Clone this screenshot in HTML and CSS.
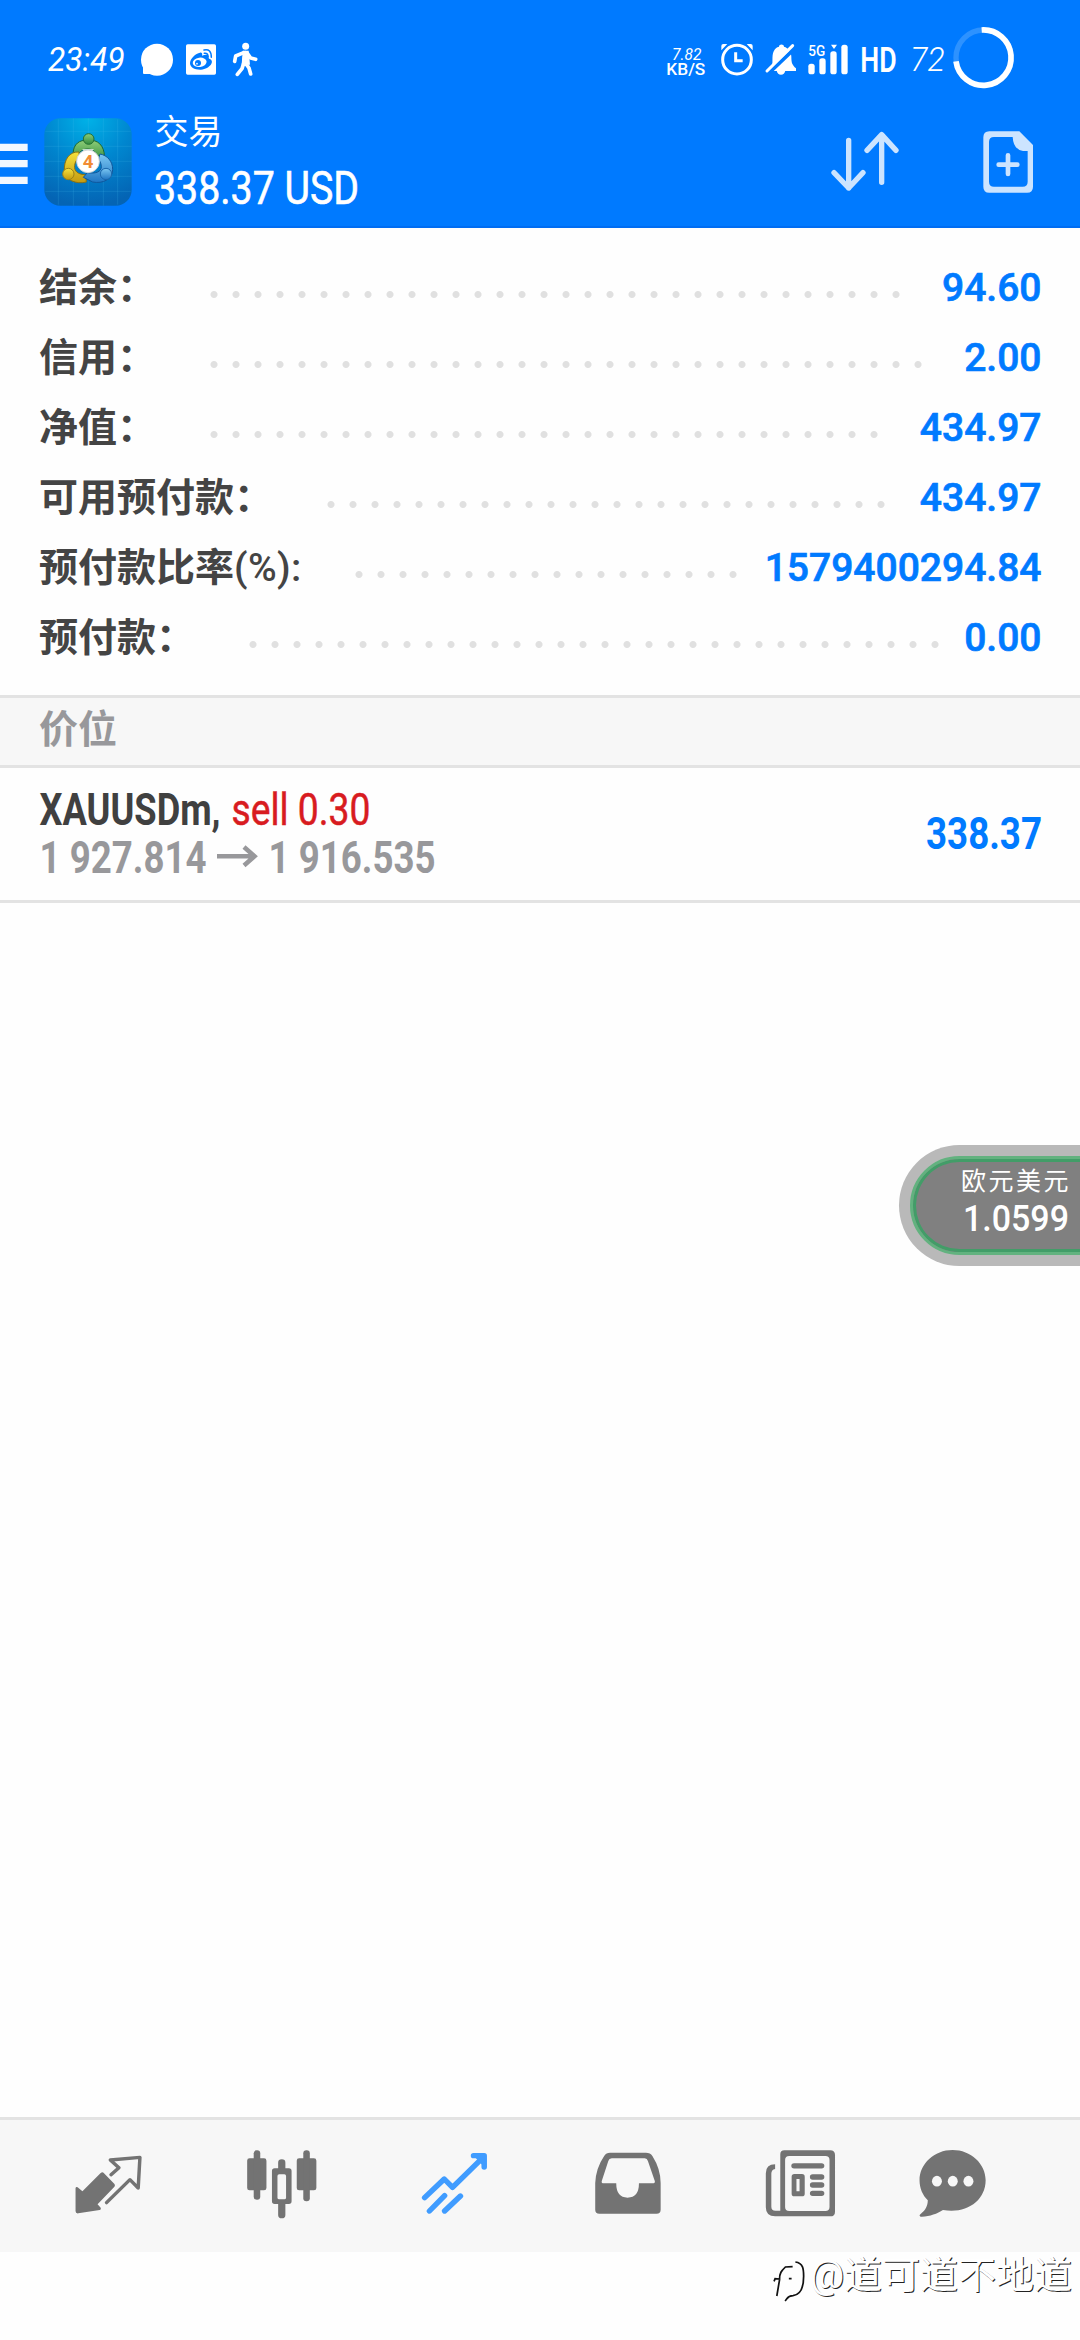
FILE: index.html
```html
<!DOCTYPE html>
<html lang="zh-CN">
<head>
<meta charset="utf-8">
<title>交易</title>
<link rel="stylesheet" href="styles.css">
</head>
<body>
<div class="screen">
  <header class="header">
    <div class="status">
      <svg class="st-time" viewBox="141 75 240 195"><text x="144" y="212" font-size="98" font-style="italic" font-weight="400" textLength="230" lengthAdjust="spacingAndGlyphs">23:49</text></svg>
      <svg class="st-bubble" viewBox="420 75 102 195"><circle cx="471" cy="179" r="48"/><path d="M429 190v29q0 3 3 3h40z"/></svg>
      <svg class="st-weibo" viewBox="555 75 96 195">
        <rect x="558" y="133" width="90" height="91" rx="5"/>
        <g fill="#007aff"><path d="M570 189c1-14 17-29 30-31 6-1 8 4 6 9 9-4 21-5 20 4 0 3 0 4 2 5 18 6 3 30-25 33-18 1-33-7-33-20z"/></g>
        <ellipse cx="599" cy="187" rx="21" ry="14" transform="rotate(-8 599 187)"/>
        <circle cx="594" cy="189" r="9" fill="#007aff"/><circle cx="591" cy="191" r="2.500"/>
        <path d="M612 150q22-5 22 22M613 160q11-2 11 10" fill="none" stroke="#007aff" stroke-width="4.500" stroke-linecap="round"/>
      </svg>
      <svg class="st-walk" viewBox="696 75 78 195"><circle cx="737" cy="139" r="10.500"/><path d="M736 158L731 190M731 158L707 168L704 184M742 160L752 174L767 178M731 190L726 206L712 223M737 190L747 204L752 222" fill="none" stroke="#fff" stroke-width="11" stroke-linecap="round" stroke-linejoin="round"/><path d="M728 152h18l4 42h-25z"/></svg>
      <svg class="st-speed" viewBox="78 75 120 195"><text x="96" y="179" font-size="51" font-style="italic" textLength="88" lengthAdjust="spacingAndGlyphs">7.82</text><text x="79" y="224" font-size="48" font-weight="500" textLength="117" lengthAdjust="spacingAndGlyphs">KB/S</text></svg>
      <svg class="st-alarm" viewBox="240 75 102 195"><g fill="none" stroke="#fff"><circle cx="291" cy="179" r="43" stroke-width="9"/><path d="M287 157v25h21" stroke-width="9"/></g><path d="M244 151v-13q0-6 6-6h12zM338 151v-13q0-6-6-6h-12z"/></svg>
      <svg class="st-bell" viewBox="375 75 96 195"><path d="M392 207c9-9 3-31 7-47 4-14 12-19 18-20 0-9 15-9 15 0 13 4 22 15 22 30 0 20 3 24 14 35v8h-76zM410 212h26q-3 12-13 12t-13-12z"/><path d="M383 222L467 142" stroke="#007aff" stroke-width="12"/><path d="M381 213L458 137" stroke="#fff" stroke-width="9" stroke-linecap="round"/></svg>
      <svg class="st-signal" viewBox="501 75 126 195"><text x="505" y="167" font-size="43" font-weight="500" textLength="51" lengthAdjust="spacingAndGlyphs">5G</text><rect x="505" y="191" width="19" height="32" rx="8"/><rect x="538" y="175" width="19" height="48" rx="8"/><rect x="571" y="154" width="19" height="69" rx="8"/><rect x="604" y="134" width="19" height="89" rx="8"/><path d="M573 134h18l-9 13z"/></svg>
      <svg class="st-hd" viewBox="663 75 105 195"><text x="661" y="216" font-size="106" font-weight="600" textLength="109" lengthAdjust="spacingAndGlyphs">HD</text></svg>
      <svg class="st-pct" viewBox="810 75 108 195"><text x="811" y="212" font-size="97" font-weight="300" font-style="italic" textLength="103" lengthAdjust="spacingAndGlyphs">72</text></svg>
      <svg class="st-ring" viewBox="933 75 195 195"><circle cx="1031" cy="173" r="83" stroke="#2d92ff" stroke-width="16" fill="none"/><path d="M1025 90A83 83 0 1 1 948 184" fill="none" stroke="#fff" stroke-width="17"/></svg>
    </div>
    <div class="bar">
      <svg class="menu" viewBox="0 270 90 414"><path fill="#f2f7ff" d="M0 431h83v22H0zM0 480h83v22H0zM0 530h83v22H0z"/></svg>
      <svg class="logo" viewBox="129 270 270 414">
        <defs>
          <radialGradient id="sky" cx=".5" cy="0" r="1"><stop offset="0" stop-color="#00b2e8"/><stop offset=".5" stop-color="#0086cf"/><stop offset="1" stop-color="#0464b4"/></radialGradient>
          <linearGradient id="gr" x2="0" y2="1"><stop offset="0" stop-color="#8fce78"/><stop offset="1" stop-color="#2f8a3d"/></linearGradient>
          <linearGradient id="ye" x2="0" y2="1"><stop offset="0" stop-color="#f5e23c"/><stop offset="1" stop-color="#c49a10"/></linearGradient>
          <linearGradient id="bl" x2="0" y2="1"><stop offset="0" stop-color="#7cc8f2"/><stop offset="1" stop-color="#1f76c4"/></linearGradient>
        </defs>
        <rect x="133" y="355" width="262" height="262" rx="48" fill="url(#sky)"/>
        <path d="M175 358v256M220 355v262M265 355v262M310 355v262M353 358v256M136 394h256M133 439h262M133 484h262M133 529h262M136 574h256" stroke="#4cc4ee" stroke-opacity=".28" stroke-width="2"/>
        <g stroke-width="3">
          <path d="M220 470c-4-30 12-48 34-49h22c24 2 42 25 36 62l-20-2c0-20-10-34-28-34s-26 8-27 20z" fill="url(#gr)" stroke="#1b6731"/>
          <path d="M237 456c-28-2-46 22-44 58 2 26 36 40 66 32l-2-22c-22 0-36-10-33-28 1-10 6-18 13-22z" fill="url(#ye)" stroke="#8b7212"/>
          <path d="M300 462c22 4 38 22 38 46 0 30-30 44-60 38l-28-14 12-14c24 4 42-2 42-18 0-12-8-20-8-26z" fill="url(#bl)" stroke="#10579c"/>
          <circle cx="266" cy="417" r="16" fill="url(#gr)" stroke="#246f34"/>
          <circle cx="205" cy="522" r="17" fill="url(#ye)" stroke="#9b8219"/>
          <circle cx="318" cy="522" r="17" fill="url(#bl)" stroke="#1b67ac"/>
          <path d="M246 448h36l-18 14z" fill="#f8fff4"/>
          <circle cx="264" cy="484" r="34" fill="#fff" stroke="#d2d5d8"/>
        </g>
        <text x="248" y="505" font-size="56" font-weight="700" fill="#f18c35">4</text>
      </svg>
      <svg class="heading" viewBox="150 90 250 138"><text class="cjk" x="154.500" y="144" font-size="34">交易</text><text class="firm" x="154" y="204" font-size="47" textLength="205" lengthAdjust="spacingAndGlyphs">338.37 USD</text></svg>
      <svg class="sort" viewBox="570 270 210 414"><path d="M626 421V564M582 518L626 564L669 518M725 547V404M681 451L725 404L768 451" fill="none" stroke="#cce4ff" stroke-width="16" stroke-linecap="round" stroke-linejoin="round"/></svg>
      <svg class="add" viewBox="1026 270 156 414"><path fill="#cce4ff" fill-rule="evenodd" d="M1048 394h90l41 41v125q0 18-18 18h-113q-18 0-18-18V412q0-18 18-18zM1062 411q-15 0-15 15v119q0 15 15 15h86q15 0 15-15v-92h-14q-29-4-31-42z"/><path d="M1104 466v56M1076 494h56" stroke="#cce4ff" stroke-width="14" stroke-linecap="round"/></svg>
    </div>
  </header>

  <section class="summary">
    <div class="row"><span>结余：</span><i class="dots" style="--n:32"></i><b>94.60</b></div>
    <div class="row"><span>信用：</span><i class="dots" style="--n:33"></i><b>2.00</b></div>
    <div class="row"><span>净值：</span><i class="dots" style="--n:31"></i><b>434.97</b></div>
    <div class="row"><span>可用预付款：</span><i class="dots" style="--n:26"></i><b>434.97</b></div>
    <div class="row"><span>预付款比率<em>(%):</em></span><i class="dots" style="--n:18"></i><b>1579400294.84</b></div>
    <div class="row"><span>预付款：</span><i class="dots" style="--n:32"></i><b>0.00</b></div>
  </section>
  <h2 class="section">价位</h2>
  <div class="trade">
    <svg class="deal" viewBox="39 768 410 132">
      <text x="39.500" y="825" font-size="44" font-weight="700" fill="#404040" textLength="181" lengthAdjust="spacingAndGlyphs">XAUUSDm,</text>
      <text class="sell" x="231.500" y="825" font-size="44" textLength="139" lengthAdjust="spacingAndGlyphs">sell 0.30</text>
      <g font-size="44" font-weight="700" fill="#98989b"><text x="39.500" y="873" textLength="167" lengthAdjust="spacingAndGlyphs">1 927.814</text><text x="268.500" y="873" textLength="167" lengthAdjust="spacingAndGlyphs">1 916.535</text></g>
      <path d="M217 856.300h38M244 847l10.500 9.300L244 865.500" fill="none" stroke="#98989b" stroke-width="4.500"/>
    </svg>
    <svg class="profit" viewBox="920 768 125 132"><text x="926" y="849" font-size="44" font-weight="700" fill="#007aff" textLength="116" lengthAdjust="spacingAndGlyphs">338.37</text></svg>
  </div>
  <main class="empty"></main>

  <nav class="tabs">
    <svg viewBox="200 140 230 230" preserveAspectRatio="none"><path d="M219 264q1-6 6-3l14 12 53-55q5-4 9 0l31 33q3 4 0 8l-49 53 9 10q3 5-3 7l-62 10q-8 1-8-7z"/><path d="M322 223L345 202L320 179L406 171L401 263L377 238L309 307" fill="none" stroke="#737373" stroke-width="10" stroke-linecap="round" stroke-linejoin="round"/></svg>
    <svg viewBox="701 140 230 230" preserveAspectRatio="none"><rect x="716" y="174" width="56" height="96" rx="7"/><rect x="735" y="150" width="19" height="148" rx="9"/><rect x="860" y="174" width="57" height="96" rx="7"/><rect x="879" y="150" width="19" height="153" rx="9"/><path fill-rule="evenodd" d="M796 204h10v-17q0-10 10.500-10t10.500 10v17h10q8 0 8 8v91q0 8-8 8h-10v33q0 10-10.500 10t-10.500-10v-33h-10q-8 0-8-8v-91q0-8 8-8zm13 18q-5 0-5 5v65q0 5 5 5h15q5 0 5-5v-65q0-5-5-5z"/></svg>
    <svg viewBox="1204 140 230 230" preserveAspectRatio="none"><path d="M1232 292L1289 236L1313 261L1404 169M1374 166H1405V200M1246 332L1290 286M1290 332L1336 287" fill="none" stroke="#409cff" stroke-width="16" stroke-linecap="round" stroke-linejoin="round"/><path fill="#409cff" d="M1374 166h31v34z"/></svg>
    <svg viewBox="139 140 230 230" preserveAspectRatio="none"><path fill-rule="evenodd" d="M203 157h104q13 0 19 10 24 39 24 81v80q0 12-12 12H172q-12 0-12-12v-80q2-45 26-81 6-10 17-10zm5 17q-8 0-10 8l-19 60q-2 7 6 7h36q0 43 33 43t33-43h39q9 0 7-7l-20-60q-2-8-9-8z"/></svg>
    <svg viewBox="643 140 230 230" preserveAspectRatio="none"><path fill-rule="evenodd" d="M711 150h133q14 0 14 14v170q0 14-14 14H684q-27 0-27-27V219q0-27 27-27v14q-11 2-11 14v99q0 12 12 12h14V162q0-12 12-12zm14 17q-12 0-12 12v141q0 12 12 12h105q12 0 12-12V179q0-12-12-12z"/><path d="M739 196.500h80M793 230h26M793 254h26M793 279h26" stroke="#737373" stroke-width="16" stroke-linecap="round"/><path fill-rule="evenodd" d="M740 221h22q8 0 8 8v51q0 8-8 8h-22q-8 0-8-8v-51q0-8 8-8zm6 15v37h9v-37z"/></svg>
    <svg viewBox="1084 140 230 230" preserveAspectRatio="none"><path d="M1199 149c53 0 96 41 96 91 0 62-57 102-124 89-16 11-38 19-61 20-9 0-8-6-3-9 13-9 20-24 20-40-15-15-24-36-24-60 0-50 43-91 96-91z"/><g fill="#f7f7f7"><ellipse cx="1153.500" cy="242.500" rx="14.500" ry="16"/><ellipse cx="1199.500" cy="242.500" rx="14.500" ry="16"/><ellipse cx="1245" cy="242.500" rx="14.500" ry="16"/></g></svg>
  </nav>
  <footer class="credit">
    <svg class="mark" viewBox="665 470 100 150" preserveAspectRatio="none"><path d="M733 488c23 3 24 22 24 43 0 39-14 56-31 58-17 1-15 8-23 16M679 590l8-49M671 546l3-8 13 1c0-18 5-24 17-36l21-1M714 538h8" fill="none" stroke="#111" stroke-width="5"/></svg>
    <span>@道可道不地道</span>
  </footer>

  <aside class="quote">
    <div class="quote-pill">
      <span class="pair">欧元美元</span>
      <svg class="price" viewBox="961 1203 112 34"><text x="963" y="1233" font-size="37.500" font-weight="500" textLength="106" lengthAdjust="spacingAndGlyphs">1.0599</text></svg>
    </div>
  </aside>
</div>
</body>
</html>
```
FILE: styles.css
```css
* { box-sizing: border-box; }
body { margin: 0; background: #fefefe; font-family: Roboto, "Noto Sans CJK SC", sans-serif; }
svg { display: block; flex: none; overflow: visible; }
.screen { position: relative; width: 1080px; height: 2340px; overflow: hidden; display: flex; flex-direction: column; }

.header { height: 228px; padding-top: 25px; background: #007aff; border-bottom: 2px solid #006df2; }
.header svg { fill: #fff; }
.cjk { font-family: "Noto Sans CJK SC", sans-serif; }
.firm { stroke: #fff; stroke-width: .6px; }
.status { display: flex; height: 65px; padding-left: 47px; }
.status svg { height: 65px; }
.st-time { width: 80px; }
.st-bubble { width: 34px; margin-left: 13px; }
.st-weibo { width: 32px; margin-left: 11px; }
.st-walk { width: 26px; margin-left: 15px; }
.st-speed { width: 40px; margin-left: 408px; }
.st-alarm { width: 34px; margin-left: 14px; }
.st-bell { width: 32px; margin-left: 11px; }
.st-signal { width: 42px; margin-left: 10px; }
.st-hd { width: 35px; margin-left: 12px; }
.st-pct { width: 36px; margin-left: 14px; }
.st-ring { width: 65px; margin-left: 5px; }

.bar { display: flex; height: 136px; }
.bar svg { height: 138px; }
.menu { width: 30px; }
.logo { width: 90px; margin-left: 13px; }
.heading { width: 250px; margin-left: 17px; }
.sort { width: 70px; margin-left: auto; }
.add { width: 52px; margin: 0 46px 0 82px; }

.summary { height: 467px; padding: 25px 38.500px 0 39px; background: #fefefe; font-size: 39px; }
.row { display: flex; height: 70px; line-height: 70px; }
.row span { color: #444; font-weight: 700; }
.row em { font-style: normal; font-weight: 500; letter-spacing: .4px; }
.row b { margin-left: auto; color: #007aff; font-weight: 500; -webkit-text-stroke: .7px #007aff; }
.dots { width: calc(var(--n) * 22px); height: 70px; margin-left: 46.500px; flex: none;
  background: radial-gradient(circle at 11px 41.500px, #e0e0e0 3px, transparent 4px) 0 0 / 22px 70px; }

.section { height: 73px; margin: 0; padding-left: 39px; border: solid #e3e3e3; border-width: 3px 0; background: #f7f7f7;
  color: #98989b; font-size: 39px; font-weight: 700; line-height: 65px; }
.trade { display: flex; justify-content: space-between; height: 135px; padding: 0 35px 0 39px; border-bottom: 3px solid #e3e3e3; }
.trade svg { height: 132px; }
.deal { width: 410px; }
.sell { fill: #d81b20; stroke: #d81b20; stroke-width: .5px; }
.profit { width: 125px; }
.empty { flex: 1; }

.tabs { display: grid; grid-template-columns: repeat(5, 173px) 131px; justify-items: center; height: 135px; padding: 27px 0 0 22px;
  border-top: 3px solid #e3e3e3; background: #f7f7f7; }
.tabs svg { width: 79.200px; height: 76.700px; fill: #737373; }
.credit { display: flex; justify-content: flex-end; height: 88px; padding: 2px 8px 0 0; color: #fff; font-size: 38px; font-weight: 400;
  line-height: 42px; text-shadow: 1px 1px 0 #222; white-space: nowrap; }
.mark { width: 34.400px; height: 50px; margin: 2px 3px 0 0; }

/* Floating quote bubble, docked to the right screen edge */
.quote { position: absolute; left: 899px; top: 1145px; width: 240px; height: 121px; padding: 11px; border-radius: 61px; background: #b9b9b9; }
.quote-pill { height: 99px; padding: 3px 0 0 48px; border: 3px solid #62b27f; border-radius: 50px; background: #808080; color: #fff; box-shadow: inset 0 0 0 3px #429d68; }
.pair { display: block; height: 34px; font: 400 25px/34px "Noto Sans CJK SC", sans-serif; letter-spacing: 2.500px; }
.price { width: 112px; height: 34px; margin-top: 5px; fill: #fff; }
```
